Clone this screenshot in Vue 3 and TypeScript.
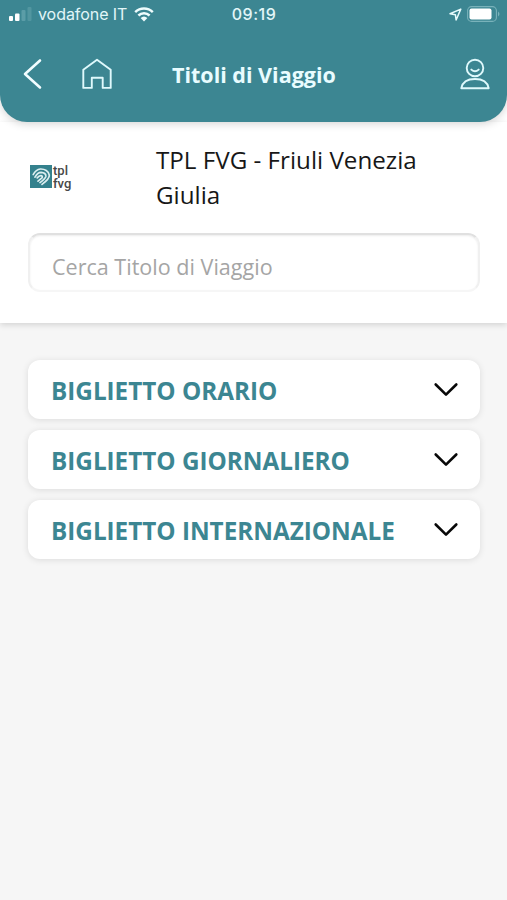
<script setup lang="ts">
import { ref } from 'vue'

interface TicketGroup {
  id: string
  label: string
}

const query = ref('')
const groups: TicketGroup[] = [
  { id: 'orario', label: 'BIGLIETTO ORARIO' },
  { id: 'giornaliero', label: 'BIGLIETTO GIORNALIERO' },
  { id: 'internazionale', label: 'BIGLIETTO INTERNAZIONALE' },
]
</script>

<template>
  <div class="screen">
    <header class="header">
      <div class="status">
        <div class="carrier">
          <svg class="signal" width="23" height="14" viewBox="0 0 23 14">
            <rect x="0" y="9" width="4" height="5" rx="1" fill="#fff" />
            <rect x="6" y="6.5" width="4.5" height="7.5" rx="1" fill="#fff" />
            <rect x="12.5" y="3" width="4" height="11" rx="1" fill="#5b9da7" />
            <rect x="18.5" y="0" width="4" height="14" rx="1" fill="#5296a0" />
          </svg>
          <span class="operator">vodafone IT</span>
          <svg class="wifi" width="20" height="15" viewBox="0 0 20 15">
            <path d="M1.2 5.1a12.8 12.8 0 0 1 17.6 0M4.4 8.5a8.2 8.2 0 0 1 11.2 0" fill="none" stroke="#effcfd" stroke-width="2.5" />
            <path d="M6.6 11a5 5 0 0 1 6.8 0L10 14.5z" fill="#effcfd" />
          </svg>
        </div>
        <time class="clock">09:19</time>
        <div class="power">
          <svg width="13" height="13" viewBox="0 0 13 13">
            <path d="M11.8 1.1 1 5.8l5.4.9.7 5.3z" fill="none" stroke="#e6fafc" stroke-width="1.5" stroke-linejoin="round" />
          </svg>
          <svg width="33" height="16" viewBox="0 0 33 16">
            <rect x=".6" y=".6" width="28.8" height="14.8" rx="4" fill="none" stroke="#79b2ba" stroke-width="1.1" />
            <rect x="2.5" y="2.5" width="22" height="11" rx="2" fill="#fff" />
            <path d="M31 5.5q3 2.5 0 5z" fill="#79b2ba" />
          </svg>
        </div>
      </div>
      <nav class="bar">
        <button class="icon back" aria-label="Indietro">
          <svg width="20" height="32" viewBox="0 0 20 32">
            <path d="M17 2.5 2 16l15 13.5" fill="none" stroke="#f2fdff" stroke-width="2.6" stroke-linecap="round" stroke-linejoin="round" />
          </svg>
        </button>
        <button class="icon home" aria-label="Home">
          <svg width="30" height="32" viewBox="0 0 30 32">
            <path d="M1.3 11.8 15 1.7l13.7 10.1v18.1h-8V19.7H9.8v10.2H1.3z" fill="none" stroke="#dff9fc" stroke-width="1.9" stroke-linejoin="round" />
          </svg>
        </button>
        <h1 class="title">Titoli di Viaggio</h1>
        <button class="icon user" aria-label="Profilo">
          <svg width="30" height="32" viewBox="0 0 30 32">
            <g fill="none" stroke="#dff9fc" stroke-width="1.9" stroke-linejoin="round" stroke-linecap="round">
              <circle cx="15" cy="10" r="8.3" />
              <path d="M11.3 11.6q3.7 3.5 7.4 0M1.3 30.2c1.2-6.1 6.4-9.2 13.7-9.2s12.5 3.1 13.7 9.2z" />
            </g>
          </svg>
        </button>
      </nav>
    </header>

    <section class="company">
      <div class="company-row">
        <div class="logo">
          <svg width="22" height="23" viewBox="0 0 22 23">
            <rect width="22" height="23" fill="#34818d" />
            <g fill="none" stroke="#dceef0" stroke-width="1.7" stroke-linejoin="round" stroke-linecap="round">
              <path d="M3.2 9.6c1.8-3.2 4-5.2 7.2-5.6 4.400-.2 8.300 2.200 8.900 6.200.2 3-2.800 5.800-7.300 9.200" />
              <path d="M5 12.200c1.600-3 3.400-4.900 6.100-4.900 3 .1 5 1.700 4.800 4.100-.4 2-2.800 3.900-5.900 6.200" />
              <path d="M7.200 12.900c1.200-1.500 2.300-2.400 3.800-2.300 1.600.3 1.700 1.400.7 2.600l-3.700 3" />
            </g>
          </svg>
          <span class="logo-text"><span>tpl</span><span>fvg</span></span>
        </div>
        <p class="company-name">TPL FVG - Friuli Venezia Giulia</p>
      </div>
      <input v-model="query" class="search" type="text" placeholder="Cerca Titolo di Viaggio" />
    </section>

    <main class="groups">
      <button v-for="group in groups" :key="group.id" class="group">
        <span class="label">{{ group.label }}</span>
        <svg width="26" height="16" viewBox="0 0 26 16">
          <path d="M2.7 2.500 13 12.700 23.300 2.500" fill="none" stroke="#080808" stroke-width="2.6" stroke-linecap="round" stroke-linejoin="round" />
        </svg>
      </button>
    </main>
  </div>
</template>

<style>
body {
  background: #f6f6f6;
}
</style>

<style scoped>
.screen {
  min-height: 900px;
  background: linear-gradient(#fff 0 200px, #f6f6f6 200px);
  font-family: 'Open Sans', sans-serif;
  overflow: hidden;
}

.header {
  position: relative;
  box-sizing: border-box;
  height: 122px;
  border-radius: 0 0 27px 27px;
  background: #3c8692;
  box-shadow: 0 2px 8px rgba(0, 0, 0, 0.17);
}

.status {
  display: grid;
  grid-template-columns: 1fr auto 1fr;
  align-items: center;
  height: 28px;
  padding: 0 7px 0 9px;
  color: #e2f6f8;
  font-family: Inter, sans-serif;
  font-size: 16px;
}

.carrier,
.power {
  display: flex;
  align-items: center;
}

.operator {
  margin: 0 7px 0 6px;
  letter-spacing: -0.06px;
  white-space: nowrap;
}

.clock {
  margin-left: -1px;
  font-weight: 500;
  letter-spacing: 0.5px;
}

.power {
  justify-content: flex-end;
  gap: 5px;
}

.bar {
  display: flex;
  align-items: center;
  height: 92px;
  padding: 0 17px 0 23px;
}

.icon {
  display: flex;
  padding: 0;
  border: 0;
  background: none;
}

.home {
  margin-left: 39px;
}

.title {
  margin: 2px auto 0 60px;
  color: #e8fcff;
  font-size: 21.5px;
  font-weight: 700;
  line-height: 30px;
}

.company {
  box-sizing: border-box;
  height: 201px;
  padding: 20px 27px 0 28px;
  background: #fff;
  box-shadow: 0 2px 6px rgba(0, 0, 0, 0.14);
}

.company-row {
  display: grid;
  grid-template-columns: 128px 1fr;
  height: 91px;
}

.logo {
  display: flex;
  height: 27px;
  margin-top: 21px;
  padding-left: 2px;
  align-items: center;
}

.logo-text {
  display: flex;
  flex-direction: column;
  padding-left: 1px;
  color: #484848;
  font-family: Roboto, sans-serif;
  font-size: 13px;
  font-weight: 500;
  line-height: 13px;
}

.company-name {
  margin: 0;
  color: #171717;
  font-size: 24.2px;
  line-height: 35px;
}

.search {
  box-sizing: border-box;
  display: block;
  width: 452px;
  height: 59px;
  padding: 7px 22px 0;
  border: 2px solid;
  border-color: #e0e0e0 #f0f0f0 #f6f6f6;
  border-radius: 12px;
  outline: 0;
  background: #fff;
  box-shadow: inset 0 1px 2px rgba(0, 0, 0, 0.08);
  font: 21.55px 'Open Sans', sans-serif;
}

.search::placeholder {
  color: #a5a5a5;
  opacity: 1;
}

.groups {
  display: flex;
  flex-direction: column;
  gap: 11px;
  padding: 37px 27px 0 28px;
}

.group {
  display: flex;
  align-items: center;
  justify-content: space-between;
  height: 59px;
  padding: 0 21px 0 23px;
  border: 0;
  border-radius: 12px;
  background: #fff;
  box-shadow: 0 1px 7px rgba(0, 0, 0, 0.11);
  color: #3c8692;
  font: 700 24.25px 'Open Sans', sans-serif;
}

.label {
  padding-top: 2px;
}
</style>
